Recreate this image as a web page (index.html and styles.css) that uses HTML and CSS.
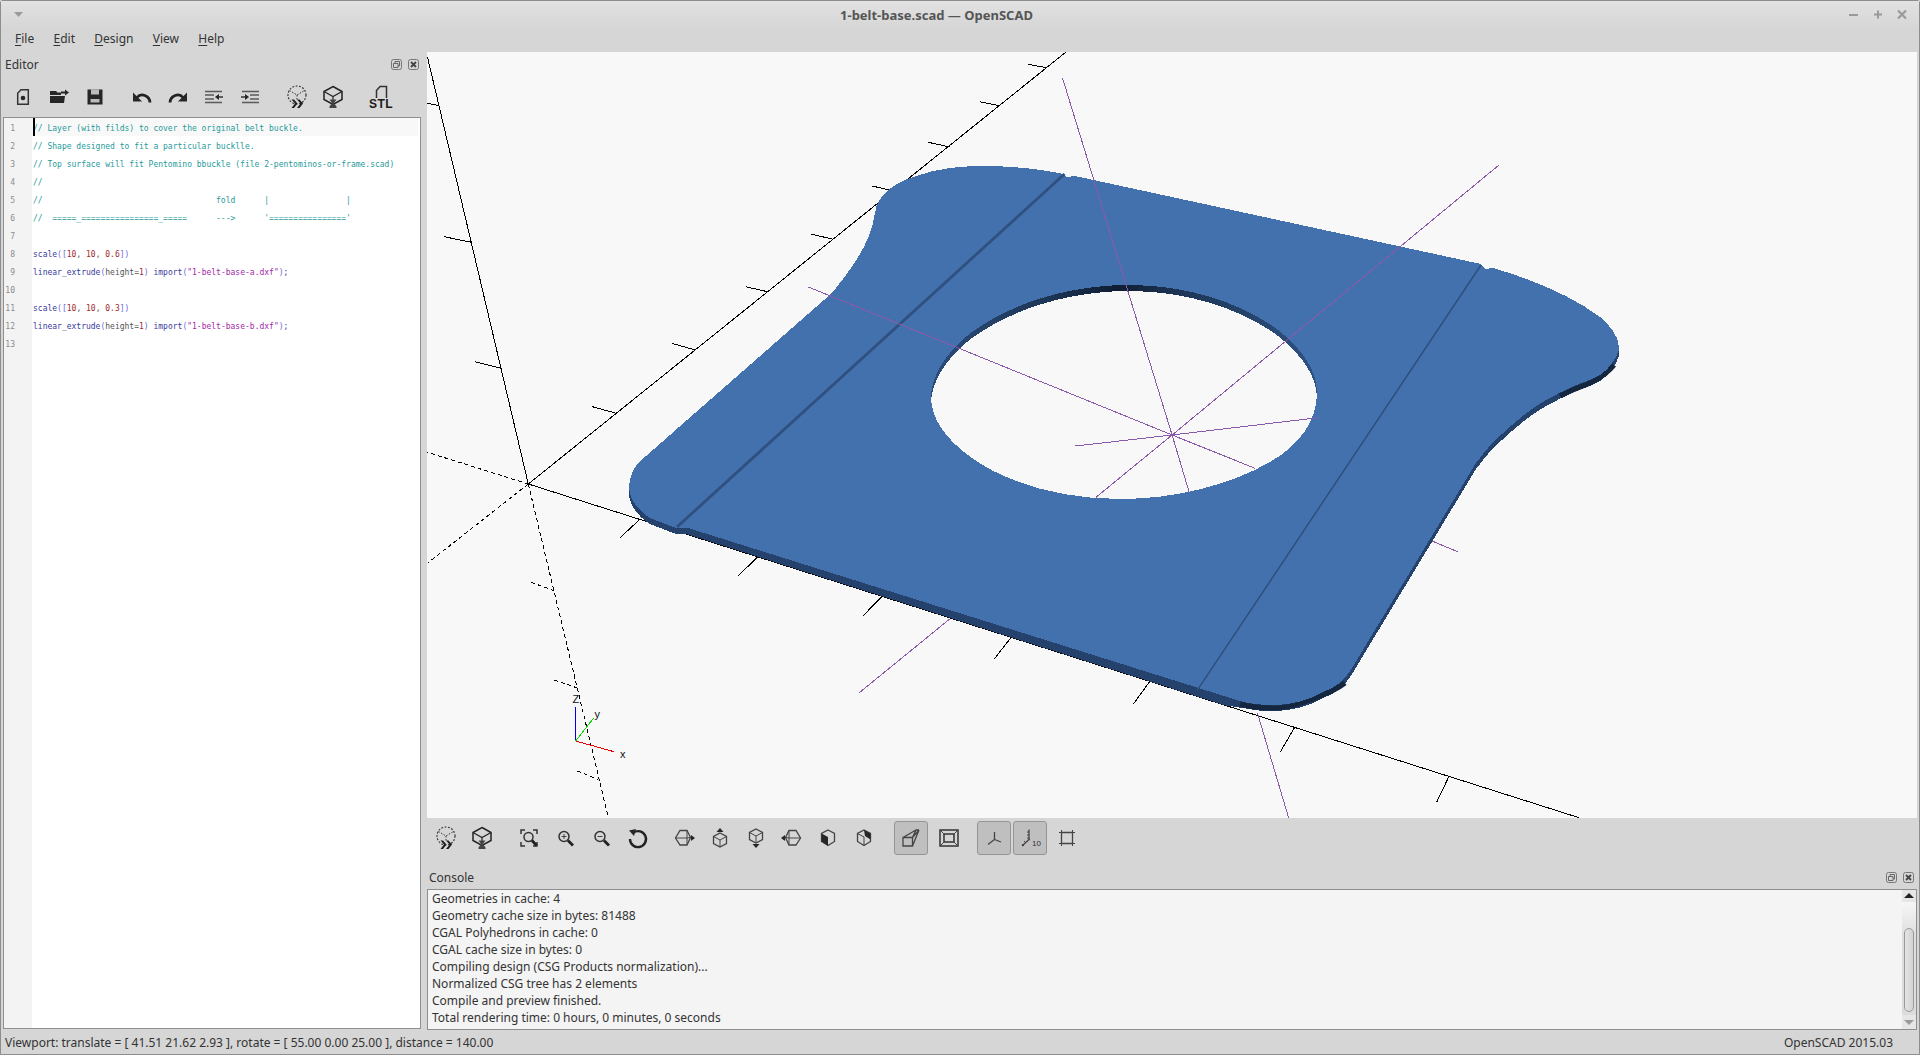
FILE: index.html
```html
<!DOCTYPE html>
<html lang="en">
<head>
<meta charset="utf-8">
<title>1-belt-base.scad — OpenSCAD</title>
<link rel="stylesheet" href="styles.css">
</head>
<body>
<div class="window">
  <header class="titlebar">
    <svg class="wm-menu" width="12" height="8" viewBox="0 0 12 8"><path d="M1 1h9L5.500 6z" fill="#9a9a9a"/></svg>
    <div class="title">1-belt-base.scad — OpenSCAD</div>
    <div class="wm-buttons">
      <svg width="12" height="12" viewBox="0 0 12 12"><path d="M1 6h9" stroke="#9a9a9a" stroke-width="2"/></svg>
      <svg width="12" height="12" viewBox="0 0 12 12"><path d="M6 1.500v8M2 5.500h8" stroke="#9a9a9a" stroke-width="2"/></svg>
      <svg width="12" height="12" viewBox="0 0 12 12"><path d="M2 1.500l8 8M10 1.500l-8 8" stroke="#9a9a9a" stroke-width="2.200"/></svg>
    </div>
  </header>
  <nav class="menubar">
    <span class="menu"><u>F</u>ile</span>
    <span class="menu"><u>E</u>dit</span>
    <span class="menu"><u>D</u>esign</span>
    <span class="menu"><u>V</u>iew</span>
    <span class="menu"><u>H</u>elp</span>
  </nav>
  <div class="main">
    <aside class="left">
      <div class="dock-title editor-title">
        <span>Editor</span>
        <span class="dock-buttons">
          <svg width="11" height="11" viewBox="0 0 11 11"><rect x=".5" y=".5" width="10" height="10" rx="2" class="dock-frame"/><path d="M4 4V2.500h4.500V7H7M2.500 4.500H7V8.500H2.500z" class="dock-line"/></svg>
          <svg width="11" height="11" viewBox="0 0 11 11"><rect x=".5" y=".5" width="10" height="10" rx="2" class="dock-frame"/><path d="M3 3l5 5M8 3l-5 5" class="dock-x"/></svg>
        </span>
      </div>
      <div class="toolbar editor-tools">
        <span class="btn"><svg class="ico" viewBox="0 0 24 24"><path d="M10 4.700H17.300V19.300H6.700V8.200Z" class="line"/><circle cx="12" cy="13" r="2.300" class="solid"/></svg></span>
        <span class="btn"><svg class="ico" viewBox="0 0 24 24"><path d="M3 6h6l1.500 1.500H14v2.500H3zM3 11h15l-1 7H3z" class="solid"/><path d="M14 6.500h4V4.500l4 3-4 3V8.500h-4z" class="solid"/></svg></span>
        <span class="btn"><svg class="ico" viewBox="0 0 24 24"><path d="M4.500 4.500h15v15h-15z" class="solid"/><path d="M8 4.500h8v5H8zM7.500 14h9v3.500h-9z" class="light"/></svg></span>
        <span class="sep"></span>
        <span class="btn"><svg class="ico" viewBox="0 0 24 24"><path d="M20 17.500C19.500 10.500 11 7.500 7 12.500" class="thick"/><path d="M3 7.500V16.500H12z" class="solid"/></svg></span>
        <span class="btn"><svg class="ico" viewBox="0 0 24 24"><g transform="matrix(-1 0 0 1 24 0)"><path d="M20 17.500C19.500 10.500 11 7.500 7 12.500" class="thick"/><path d="M3 7.500V16.500H12z" class="solid"/></g></svg></span>
        <span class="btn"><svg class="ico" viewBox="0 0 24 24"><path d="M3 6.500H20M3 10H12M3 14H12M3 17.500H20" class="soft"/><path d="M21 12H15" class="line"/><path d="M13 12l4-3v6z" class="solid"/></svg></span>
        <span class="btn"><svg class="ico" viewBox="0 0 24 24"><path d="M4 6.500H21M12 10H21M12 14H21M4 17.500H21" class="soft"/><path d="M3 12H9" class="line"/><path d="M11 12l-4-3v6z" class="solid"/></svg></span>
        <span class="sep"></span>
        <span class="btn"><svg class="ico" viewBox="0 0 24 24"><use href="#dotcube"/></svg></span>
        <span class="btn"><svg class="ico" viewBox="0 0 24 24"><use href="#rendercube"/></svg></span>
        <span class="sep sep-wide"></span>
        <span class="btn"><svg class="ico" viewBox="0 0 24 24"><path d="M7.500 13V5.500L11 1.500h6.500V13" class="line"/><text x="12" y="22.500" class="stl">STL</text></svg></span>
      </div>
      <div class="editor">
        <div class="gutter">
          <div>1</div><div>2</div><div>3</div><div>4</div><div>5</div><div>6</div><div>7</div><div>8</div><div>9</div><div>10</div><div>11</div><div>12</div><div>13</div>
        </div>
        <div class="code">
          <span class="cursor"></span>
          <div class="ln current c">// Layer (with filds) to cover the original belt buckle.</div>
          <div class="ln c">// Shape designed to fit a particular bucklle.</div>
          <div class="ln c">// Top surface will fit Pentomino bbuckle (file 2-pentominos-or-frame.scad)</div>
          <div class="ln c">//</div>
          <div class="ln c">//                                    fold      |                |</div>
          <div class="ln c">//  =====_================_=====      ---&gt;      '================'</div>
          <div class="ln"></div>
          <div class="ln"><span class="k">scale</span><span class="b">([</span><span class="n">10</span><span class="g">, </span><span class="n">10</span><span class="g">, </span><span class="n">0.6</span><span class="b">])</span></div>
          <div class="ln"><span class="k">linear_extrude</span><span class="b">(</span><span class="g">height=</span><span class="n">1</span><span class="b">)</span> <span class="k">import</span><span class="b">(</span><span class="s">"1-belt-base-a.dxf"</span><span class="b">)</span><span class="k">;</span></div>
          <div class="ln"></div>
          <div class="ln"><span class="k">scale</span><span class="b">([</span><span class="n">10</span><span class="g">, </span><span class="n">10</span><span class="g">, </span><span class="n">0.3</span><span class="b">])</span></div>
          <div class="ln"><span class="k">linear_extrude</span><span class="b">(</span><span class="g">height=</span><span class="n">1</span><span class="b">)</span> <span class="k">import</span><span class="b">(</span><span class="s">"1-belt-base-b.dxf"</span><span class="b">)</span><span class="k">;</span></div>
          <div class="ln"></div>
        </div>
      </div>
    </aside>
    <section class="right">
      <div class="viewport">
        <svg class="scene" viewBox="427 52 1490 766" width="1490" height="766">
          <defs>
            <linearGradient id="wall" gradientUnits="userSpaceOnUse" x1="931" y1="0" x2="1317" y2="0">
              <stop offset="0" stop-color="#2b4c7a"/>
              <stop offset=".3" stop-color="#1e3656"/>
              <stop offset=".48" stop-color="#0f1d33"/>
              <stop offset=".62" stop-color="#1c3352"/>
              <stop offset="1" stop-color="#2f5283"/>
            </linearGradient>
            <path id="outline" d="M629 487Q630 473 638 463L832 293C852 268 871 243 875 213C877 195 893 184 913 177C940 167 965 166 985 166C1010 166 1040 169 1064 174L1066 177L1075 176L1481 264L1485 269L1493 268C1535 280 1575 298 1600 317C1610 325 1619 337 1619 347C1619 356 1608 370 1600 375C1590 381 1580 383 1572 387C1555 395 1540 402 1524 415C1506 430 1490 443 1476 463L1352 668C1345 680 1335 688 1323 692C1310 700 1290 705 1275 705C1262 705 1250 704 1240 701L688 528L676 528L650 518C640 512 629 500 629 487Z"/>
            <path id="hole" d="M931 397C931 378 945 352 972 332C1005 308 1060 285 1130 285C1190 285 1245 305 1278 330C1302 349 1317 370 1317 393C1317 420 1300 445 1270 462C1230 485 1175 499 1120 499C1060 499 1005 482 972 458C945 439 931 418 931 397Z"/>
          </defs>
          <g class="axis">
            <path d="M528.300 484L1066 52M528.300 484L427.400 56.700M528.300 484L1579 817.700"/>
            <path d="M1027.700 64.300L1046.800 67.700M979.800 101.700L999.900 105.700M928.200 142.300L949.700 147M872.200 186L889 190M811 234L833 239.300M745.500 286.700L767.500 291.700M671.800 343.300L695.200 350M592.400 406.700L616.300 413.300"/>
            <path d="M427.400 103.300L439.300 105.700M444.100 236.700L471.400 242.300M475.200 361.700L501.500 368.300"/>
            <path d="M620.100 537.700L640.200 519M738.300 575.700L757.400 557.300M863.100 615.700L881.800 596.700M994.200 659L1010.900 637.700M1133.400 704L1149.600 681.700M1280.500 751.700L1294.400 727.700M1436.900 801.700L1448.800 776.700"/>
          </g>
          <g class="axis dashed">
            <path d="M528.300 484L427.400 452.300M528.300 484L427.400 563.300M528.300 484L608.200 817"/>
            <path d="M531.200 582.300L554.100 590.700M554.100 680L576.600 687.700M577.100 771L598.100 779.300"/>
          </g>
          <g class="purple">
            <path d="M949.700 619L859.300 692.700M1432.100 541L1457.500 551.700M1257.500 713.300L1288.600 817.700"/>
          </g>
          <use href="#outline" class="side" transform="translate(0 6)"/>
          <path class="side" d="M655 524L1225 705.300L1262 711L1262 695L655 505Z"/>
          <g class="side-dark">
            <path d="M1614 362C1608 370 1600 375 1590 380C1582 384 1575 385 1560 393" transform="translate(0 3)"/>
            <path d="M1345 680C1335 688 1323 692 1310 697C1295 703 1282 705 1275 705C1262 705 1250 704 1240 701" transform="translate(0 3)"/>
          </g>
          <use href="#hole" class="gap-dark"/>
          <use href="#hole" class="gap" transform="translate(0 6)"/>
          <path class="top" fill-rule="evenodd" d="M629 487Q630 473 638 463L832 293C852 268 871 243 875 213C877 195 893 184 913 177C940 167 965 166 985 166C1010 166 1040 169 1064 174L1066 177L1075 176L1481 264L1485 269L1493 268C1535 280 1575 298 1600 317C1610 325 1619 337 1619 347C1619 356 1608 370 1600 375C1590 381 1580 383 1572 387C1555 395 1540 402 1524 415C1506 430 1490 443 1476 463L1352 668C1345 680 1335 688 1323 692C1310 700 1290 705 1275 705C1262 705 1250 704 1240 701L688 528L676 528L650 518C640 512 629 500 629 487ZM931 397C931 378 945 352 972 332C1005 308 1060 285 1130 285C1190 285 1245 305 1278 330C1302 349 1317 370 1317 393C1317 420 1300 445 1270 462C1230 485 1175 499 1120 499C1060 499 1005 482 972 458C945 439 931 418 931 397Z"/>
          <path class="fold fold-left" d="M1064.500 174L677 527"/>
          <path class="fold" d="M1481 265L1197 690.700"/>
          <g class="purple">
            <path d="M1172.100 435L1062.600 78.300M1172.100 435L1189 491.700M1172.100 435L1499 165M1172.100 435L807.600 286.700M1172.100 435L1075.500 446M1172.100 435L1318.300 417.700M1172.100 435L1255.100 468.300M1172.100 435L1096 497.300"/>
          </g>
          <path class="ind-z" d="M575.700 741V707.300"/>
          <path class="ind-y" d="M575.700 741L593.400 718.300"/>
          <path class="ind-x" d="M575.700 741L613.900 751.700"/>
          <text x="572.500" y="703" class="ind-label ind-label-z">Z</text>
          <text x="594.500" y="718" class="ind-label">y</text>
          <text x="620" y="758" class="ind-label">x</text>
        </svg>
      </div>
      <div class="toolbar view-tools">
        <span class="btn"><svg class="ico" viewBox="0 0 24 24"><use href="#dotcube"/></svg></span>
        <span class="btn"><svg class="ico" viewBox="0 0 24 24"><use href="#rendercube"/></svg></span>
        <span class="sep sep-v"></span>
        <span class="btn"><svg class="ico" viewBox="0 0 24 24"><path d="M4 8V4h4M16 4h4v4M4 16v4h4M16 20h4v-4" class="line"/><circle cx="11.500" cy="11" r="4.500" class="line"/><path d="M15 14.500l4.500 5" class="thick"/></svg></span>
        <span class="btn"><svg class="ico" viewBox="0 0 24 24"><circle cx="11" cy="10.500" r="5" class="line"/><path d="M15 14.500l5 5" class="thick"/><path d="M8.500 10.500h5M11 8v5" class="thin"/></svg></span>
        <span class="btn"><svg class="ico" viewBox="0 0 24 24"><circle cx="11" cy="10.500" r="5" class="line"/><path d="M15 14.500l5 5" class="thick"/><path d="M8.500 10.500h5" class="thin"/></svg></span>
        <span class="btn"><svg class="ico" viewBox="0 0 24 24"><path d="M8.500 6.500A8 8 0 1 1 5 13" class="thick2"/><path d="M4 4.500l7-1.500-2 7z" class="solid"/></svg></span>
        <span class="sep sep-g"></span>
        <span class="btn"><svg class="ico" viewBox="0 0 24 24"><path d="M8 4.500H15L18.500 11.500L15 19H8L3.500 12Z" class="line1"/><path d="M3.500 12H15L18.500 11.500M15 4.500V19" class="thin"/><path d="M23 12l-4-3v6z" class="solid"/></svg></span>
        <span class="btn"><svg class="ico" viewBox="0 0 24 24"><path d="M12 7l6.500 3.500v7L12 21l-6.500-3.500v-7z" class="line1"/><path d="M5.500 10.500L12 14l6.500-3.500M12 14v7" class="thin"/><path d="M12 2l-3.500 4h7z" class="solid"/></svg></span>
        <span class="btn"><svg class="ico" viewBox="0 0 24 24"><path d="M12 3l6.500 3.500v7L12 17l-6.500-3.500v-7z" class="line1"/><path d="M5.500 6.500L12 10l6.500-3.500M12 10v7" class="thin"/><path d="M12 22l-3.500-4h7z" class="solid"/></svg></span>
        <span class="btn"><svg class="ico" viewBox="0 0 24 24"><path d="M16 4.500H9L5.500 11.500L9 19H16L20.500 12Z" class="line1"/><path d="M20.500 12H9L5.500 11.500M9 4.500V19" class="thin"/><path d="M1 12l4-3v6z" class="solid"/></svg></span>
        <span class="btn"><svg class="ico" viewBox="0 0 24 24"><path d="M12 4l6.500 3.500v8L12 19.500l-6.500-4v-8z" class="line1"/><path d="M5.500 7.500L12 11v8.500l-6.500-4z" class="solid"/></svg></span>
        <span class="btn"><svg class="ico" viewBox="0 0 24 24"><path d="M12 4l6.500 3.500v8L12 19.500l-6.500-4v-8z" class="line1"/><path d="M12 4l6.500 3.500v6L13 10z" class="solid"/><path d="M5.500 7.500L12 11v8" class="thin"/></svg></span>
        <span class="sep sep-h"></span>
        <span class="btn active"><svg class="ico" viewBox="0 0 24 24"><path d="M4 11.500h9.500V20H4zM4 11.500L17 4M13.500 11.500L20 4l-6.500 16M13.500 11.500L17 4H20" class="line1"/></svg></span>
        <span class="btn ortho"><svg class="ico" viewBox="0 0 24 24"><path d="M3 4h18v16H3zM7 8h10v8H7z" class="line"/><path d="M3 4l4 4M21 4l-4 4M3 20l4-4M21 20l-4-4" class="thin"/></svg></span>
        <span class="sep sep-i"></span>
        <span class="btn active"><svg class="ico" viewBox="0 0 24 24"><path d="M12.500 6v7.500L6 18.500M12.500 13.500L19 16" class="line1"/></svg></span>
        <span class="btn active"><svg class="ico" viewBox="0 0 24 24"><path d="M11 3.500v10L4 20M11 13.500h1" class="line1"/><path d="M9 6h2M9 9h2M9 12h2M6 15l2 2M4 18l2 2" class="thin"/><text x="14" y="20" class="ten">10</text></svg></span>
        <span class="sep sep-j"></span>
        <span class="btn"><svg class="ico" viewBox="0 0 24 24"><path d="M6.500 6.500h11v11h-11z" class="line1"/><path d="M4 6.500h3M6.500 4v3M17 6.500h3M17.500 4v3M4 17.500h3M6.500 17v3M17 17.500h3M17.500 17v3" class="thin"/></svg></span>
      </div>
      <div class="dock-title console-title">
        <span>Console</span>
        <span class="dock-buttons">
          <svg width="11" height="11" viewBox="0 0 11 11"><rect x=".5" y=".5" width="10" height="10" rx="2" class="dock-frame"/><path d="M4 4V2.500h4.500V7H7M2.500 4.500H7V8.500H2.500z" class="dock-line"/></svg>
          <svg width="11" height="11" viewBox="0 0 11 11"><rect x=".5" y=".5" width="10" height="10" rx="2" class="dock-frame"/><path d="M3 3l5 5M8 3l-5 5" class="dock-x"/></svg>
        </span>
      </div>
      <div class="console">
        <div class="console-text">
          <div>Geometries in cache: 4</div>
          <div>Geometry cache size in bytes: 81488</div>
          <div>CGAL Polyhedrons in cache: 0</div>
          <div>CGAL cache size in bytes: 0</div>
          <div>Compiling design (CSG Products normalization)...</div>
          <div>Normalized CSG tree has 2 elements</div>
          <div>Compile and preview finished.</div>
          <div>Total rendering time: 0 hours, 0 minutes, 0 seconds</div>
        </div>
        <div class="scrollbar">
          <svg class="arrow" width="14" height="12" viewBox="0 0 14 12"><path d="M7 3l5 5H2z" fill="#222"/></svg>
          <div class="track"><div class="thumb"></div></div>
          <svg class="arrow" width="14" height="14" viewBox="0 0 14 14"><path d="M2 5h10l-5 5z" fill="#9a9a9a"/></svg>
        </div>
      </div>
    </section>
  </div>
  <footer class="statusbar">
    <span>Viewport: translate = [ 41.51 21.62 2.93 ], rotate = [ 55.00 0.00 25.00 ], distance = 140.00</span>
    <span>OpenSCAD 2015.03</span>
  </footer>
</div>
<svg class="defs" width="0" height="0">
  <defs>
    <g id="dotcube">
      <circle cx="12" cy="10" r="9" fill="none" stroke="#333" stroke-width="1.200" stroke-dasharray="1.800 1.600"/>
      <path d="M4.500 5.500L12 10L19.500 5.500M12 10V15" fill="none" stroke="#333" stroke-width="1" stroke-dasharray="1.500 1.500"/>
      <path d="M6.500 14.500h2.500l3.500 4-3.500 4.500H6.500l3.500-4.500zM12 14.500h2.500l3.500 4-3.500 4.500H12l3.500-4.500z" fill="#1c1c1c"/>
    </g>
    <g id="rendercube">
      <path d="M12 1.500L21 6.500V14.500L12 19.500L3 14.500V6.500Z" fill="none" stroke="#222" stroke-width="1.500"/>
      <path d="M3 6.500L12 11.500L21 6.500M12 11.500V15" fill="none" stroke="#222" stroke-width="1.200"/>
      <path d="M8.500 14.500h7l-2.500 3.500 2.500 3.500v1.500h-7v-1.500l2.500-3.500z" fill="#444"/>
    </g>
  </defs>
</svg>
</body>
</html>
```
FILE: styles.css
```css
* { box-sizing: border-box; }
html, body { margin: 0; padding: 0; height: 100%; overflow: hidden; }
body { font-family: "Noto Sans", sans-serif; font-size: 12px; color: #333; background: #d6d6d6; }
.defs { position: absolute; }

.window {
  width: 1920px; height: 1055px; display: flex; flex-direction: column;
  background: #d6d6d6; border: 1px solid #8d8d8d; border-radius: 3px 3px 0 0;
}

.titlebar {
  flex: 0 0 27px; display: grid; grid-template-columns: 1fr auto 1fr; align-items: center;
  background: linear-gradient(#e2e2e2, #d6d6d6); padding: 0 11px 0 12px;
}
.wm-menu { justify-self: start; }
.title { font-size: 13px; font-weight: 700; color: #555; margin-left: -48px; }
.wm-buttons { justify-self: end; display: flex; gap: 12px; }

.menubar { flex: 0 0 24px; display: flex; padding: 0 0 4px 14px; gap: 19.300px; align-items: center; }
.menu u { text-underline-offset: 2px; }

.main { flex: 1; display: flex; min-height: 0; }
.left { flex: 0 0 426px; width: 426px; min-width: 0; display: flex; flex-direction: column; }
.right { flex: 1; display: flex; flex-direction: column; min-width: 0; padding-right: 2px; }

.dock-title { flex: 0 0 24px; display: flex; align-items: center; justify-content: space-between; padding: 0 3px 0 4px; color: #333; }
.editor-title { padding-right: 8px; }
.dock-buttons { display: flex; gap: 6px; }
.dock-frame { fill: none; stroke: #777; }
.dock-line { fill: none; stroke: #666; }
.dock-x { fill: none; stroke: #444; stroke-width: 1.800; }

.toolbar { display: flex; align-items: center; }
.editor-tools { flex: 0 0 41px; padding-left: 4px; }
.btn { flex: 0 0 36px; height: 36px; display: flex; align-items: center; justify-content: center; }
.ico { width: 24px; height: 24px; display: block; overflow: visible; }
.sep { flex: 0 0 11px; }
.sep-wide { flex-basis: 12px; }

.line { fill: none; stroke: #333; stroke-width: 1.500; }
.line1 { fill: none; stroke: #444; stroke-width: 1.300; }
.thin { fill: none; stroke: #444; stroke-width: 1; }
.soft { fill: none; stroke: #5a5a5a; stroke-width: 1.700; }
.thick { fill: none; stroke: #222; stroke-width: 2.800; }
.thick2 { fill: none; stroke: #222; stroke-width: 2.400; }
.solid { fill: #262626; }
.light { fill: #d6d6d6; opacity: .85; }
.stl { font: 700 12px "Liberation Sans", sans-serif; fill: #1c1c1c; text-anchor: middle; letter-spacing: .4px; }
.ten { font: 8px "Liberation Sans", sans-serif; fill: #333; }

.editor { flex: 1; display: flex; margin: 0 6px 1px 2px; border: 1px solid #8f8f8f; background: #fff; min-height: 0; min-width: 0; overflow: hidden; }
.gutter { flex: 0 0 28px; background: #f3f3f3; padding: 0 17px 0 0; text-align: right; font: 8px/22px "DejaVu Sans Mono", monospace; color: #8c8c8c; }
.gutter div { height: 18px; }
.code { flex: 1; position: relative; font: 8px/22px "DejaVu Sans Mono", monospace; color: #333; min-width: 0; }
.ln { height: 18px; padding-left: 1px; white-space: pre; }
.current { background: #f8f8f8; margin-right: 2px; }
.cursor { position: absolute; left: 1px; top: 0; width: 2px; height: 18px; background: #000; }
.c { color: #1f9a9a; }
.k { color: #3a3aa0; }
.b { color: #6a6ae0; }
.n { color: #a32a2a; }
.g { color: #555; }
.s { color: #a228a8; }

.viewport { flex: 0 0 766px; background: #f8f8f8; overflow: hidden; }
.scene { display: block; }
.axis path { fill: none; stroke: #000; stroke-width: 1; shape-rendering: crispEdges; }
.axis.dashed path { stroke-dasharray: 4 3; }
.purple path { fill: none; stroke: #8a5aa8; stroke-width: 1; shape-rendering: crispEdges; }
.side { fill: #24426b; shape-rendering: crispEdges; }
.side-dark path { fill: none; stroke: #15263f; stroke-width: 5; }
.gap-dark { fill: url(#wall); shape-rendering: crispEdges; }
.gap { fill: #f8f8f8; shape-rendering: crispEdges; }
.top { fill: #4271ae; shape-rendering: crispEdges; }
.fold { fill: none; stroke: #2f4f7c; stroke-width: 1.500; }
.fold-left { stroke-width: 2.800; stroke: #30507f; }
.ind-z { stroke: #0000e6; fill: none; shape-rendering: crispEdges; }
.ind-y { stroke: #00e000; fill: none; shape-rendering: crispEdges; }
.ind-x { stroke: #e60000; fill: none; shape-rendering: crispEdges; }
.ind-label { font: 11px "Liberation Sans", sans-serif; fill: #111; }
.ind-label-z { font-size: 11px; }

.view-tools { flex: 0 0 40px; padding-left: 1px; }
.view-tools .active { background: #bfbfbf; border: 1px solid #959595; border-radius: 3px; flex-basis: 34px; height: 34px; margin: 0 1px; }
.ortho { margin-left: 2px; }
.sep-v { flex-basis: 11px; }
.sep-g { flex-basis: 11px; }
.sep-h { flex-basis: 11px; }
.sep-i { flex-basis: 9px; }
.sep-j { flex-basis: 1px; }

.console-title { flex: 0 0 31px; padding: 8px 3px 0 2px; }
.console { flex: 0 0 141px; display: flex; border: 1px solid #8f8f8f; background: #f4f4f4; margin: 0 0 1px 0; }
.console-text { flex: 1; padding: 0 4px; line-height: 17px; color: #333; }
.scrollbar { flex: 0 0 14px; display: flex; flex-direction: column; background: #e6e6e6; }
.arrow { flex: none; display: block; }
.track { flex: 1; padding: 26px 2px 1px; background: linear-gradient(#f6f6f6, #dedede 30%, #dcdcdc); }
.thumb { height: 84px; border: 1px solid #9a9a9a; border-radius: 5px; background: linear-gradient(90deg, #e4e4e4, #d2d2d2); }

.statusbar { flex: 0 0 24px; display: flex; align-items: center; justify-content: space-between; padding: 0 26px 0 4px; color: #333; }
```
